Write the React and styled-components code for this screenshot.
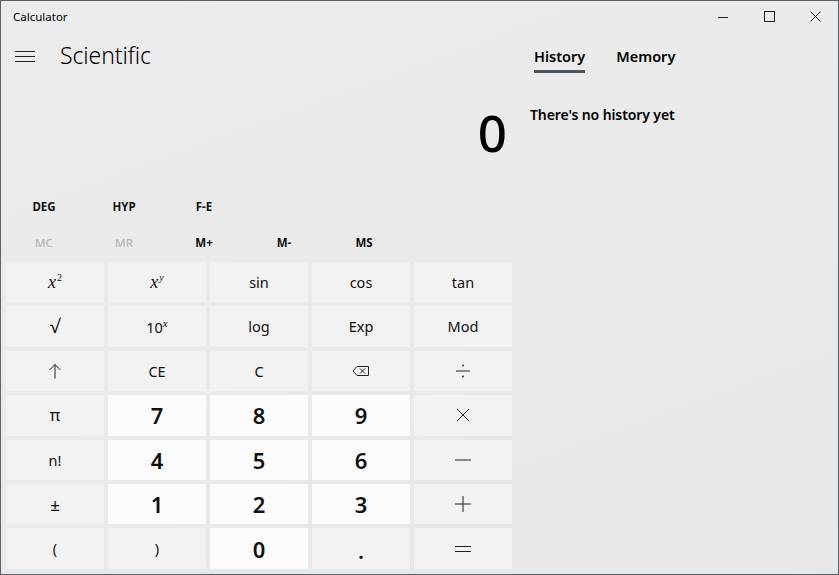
import React from "react";
import styled, { createGlobalStyle } from "styled-components";

const GlobalStyle = createGlobalStyle`
  html, body {
    margin: 0;
    padding: 0;
    background: #eaeaea;
  }
  * {
    box-sizing: border-box;
  }
`;

const Window = styled.div`
  width: 839px;
  height: 575px;
  border: 1px solid #5b6168;
  background: linear-gradient(160deg, #ececec 0%, #e9e9e9 60%, #e7e7e7 100%);
  font-family: "Noto Sans", "Open Sans", sans-serif;
  color: #000;
  display: flex;
  flex-direction: column;
  overflow: hidden;
`;

const TitleBar = styled.div`
  height: 31px;
  display: flex;
  align-items: center;
`;

const AppName = styled.div`
  flex: 1;
  padding-left: 12px;
  font-size: 11.5px;
  line-height: 1;
`;

const WinButton = styled.div`
  width: 46px;
  height: 31px;
  display: flex;
  align-items: center;
  justify-content: center;
`;

const Body = styled.div`
  flex: 1;
  display: flex;
`;

const LeftPane = styled.div`
  width: 517px;
  display: flex;
  flex-direction: column;
`;

const Header = styled.div`
  height: 49px;
  display: flex;
  align-items: center;
  padding-left: 14px;
  gap: 25px;
`;

const Title = styled.div`
  font-size: 23px;
  font-weight: 300;
  letter-spacing: -0.1px;
  margin-top: -3px;
`;

const Display = styled.div`
  height: 108px;
  display: flex;
  justify-content: flex-end;
  align-items: flex-start;
  padding-right: 11px;
  padding-top: 26px;
`;

const Value = styled.div`
  font-size: 51px;
  font-weight: 500;
  line-height: 1;
`;

const LabelRow = styled.div`
  height: 36px;
  display: flex;
  align-items: center;
  padding-left: 3px;
`;

const Label = styled.div`
  width: 80px;
  text-align: center;
  font-size: 11.5px;
  color: ${(p) => (p.disabled ? "#b5b5b5" : "#111")};
  font-weight: ${(p) => (p.disabled ? 500 : 700)};
  margin-top: -2px;
`;

const Keypad = styled.div`
  display: grid;
  grid-template-columns: repeat(5, 98px);
  grid-template-rows: repeat(7, 40.4px);
  gap: 4px;
  padding-left: 5px;
  margin-top: 1px;
`;

const Key = styled.div`
  background: ${(p) => (p.digit ? "#fbfbfb" : "#f2f2f2")};
  display: flex;
  align-items: center;
  justify-content: center;
  font-size: ${(p) => (p.digit ? "22px" : "14.5px")};
  font-weight: ${(p) => (p.digit ? 600 : 400)};
  color: #111;
  line-height: 1;
`;

const MathX = styled.span`
  font-family: "Liberation Serif", "DejaVu Serif", serif;
  font-style: italic;
  font-size: 18px;
`;

const Sup = styled.sup`
  font-size: 10px;
  font-style: ${(p) => (p.italic ? "italic" : "normal")};
  vertical-align: 7px;
  line-height: 0;
  margin-left: 1px;
`;

const RightPane = styled.div`
  flex: 1;
  padding-left: 12px;
  display: flex;
  flex-direction: column;
`;

const Tabs = styled.div`
  height: 49px;
  display: flex;
  align-items: flex-start;
  gap: 31px;
  padding-left: 4px;
  padding-top: 14px;
`;

const Tab = styled.div`
  font-size: 14.5px;
  font-weight: 600;
  padding-bottom: 4px;
  border-bottom: 3px solid ${(p) => (p.active ? "#50565e" : "transparent")};
`;

const Empty = styled.div`
  margin-top: 24px;
  font-size: 14px;
  font-weight: 600;
  letter-spacing: -0.1px;
`;

const Icon = ({ children, w = 16, h = 16 }) => (
  <svg width={w} height={h} viewBox={`0 0 ${w} ${h}`} fill="none" stroke="#222" strokeWidth="1">
    {children}
  </svg>
);

const keys = [
  [
    { l: <MathX>x<Sup>2</Sup></MathX> },
    { l: <MathX>x<Sup italic>y</Sup></MathX> },
    { l: "sin" },
    { l: "cos" },
    { l: "tan" },
  ],
  [
    { l: <span style={{ fontSize: 19 }}>√</span> },
    { l: <span>10<MathX style={{ fontSize: 11, verticalAlign: 6 }}>x</MathX></span> },
    { l: "log" },
    { l: "Exp" },
    { l: "Mod" },
  ],
  [
    {
      l: (
        <Icon w={14} h={16}>
          <path d="M7 1.5V15.5M1.5 7L7 1.5L12.5 7" />
        </Icon>
      ),
    },
    { l: "CE" },
    { l: "C" },
    {
      l: (
        <Icon w={18} h={12}>
          <path d="M5 1.5H16.5V10.5H5L1 6Z" />
          <path d="M8 3.5L13 8.5M13 3.5L8 8.5" />
        </Icon>
      ),
    },
    {
      l: (
        <Icon w={16} h={16}>
          <path d="M1 8H15" />
          <circle cx="8" cy="2.5" r="0.9" fill="#222" stroke="none" />
          <circle cx="8" cy="13.5" r="0.9" fill="#222" stroke="none" />
        </Icon>
      ),
    },
  ],
  [
    { l: <span style={{ fontSize: 16 }}>π</span> },
    { l: "7", d: true },
    { l: "8", d: true },
    { l: "9", d: true },
    {
      l: (
        <Icon w={14} h={14}>
          <path d="M1 1L13 13M13 1L1 13" />
        </Icon>
      ),
    },
  ],
  [
    { l: "n!" },
    { l: "4", d: true },
    { l: "5", d: true },
    { l: "6", d: true },
    {
      l: (
        <Icon w={16} h={4}>
          <path d="M0 2H16" />
        </Icon>
      ),
    },
  ],
  [
    { l: <span style={{ fontSize: 17 }}>±</span> },
    { l: "1", d: true },
    { l: "2", d: true },
    { l: "3", d: true },
    {
      l: (
        <Icon w={16} h={16}>
          <path d="M0 8H16M8 0V16" />
        </Icon>
      ),
    },
  ],
  [
    { l: "(" },
    { l: ")" },
    { l: "0", d: true },
    { l: <span style={{ fontSize: 22, fontWeight: 600, marginTop: 2 }}>.</span> },
    {
      l: (
        <Icon w={16} h={8}>
          <path d="M0 1.5H16M0 6.5H16" />
        </Icon>
      ),
    },
  ],
];

export default function App() {
  return (
    <>
      <GlobalStyle />
      <Window>
        <TitleBar>
          <AppName>Calculator</AppName>
          <WinButton>
            <Icon w={10} h={10}>
              <path d="M0 5.5H10" />
            </Icon>
          </WinButton>
          <WinButton>
            <Icon w={11} h={11}>
              <rect x="0.5" y="0.5" width="10" height="10" />
            </Icon>
          </WinButton>
          <WinButton>
            <Icon w={11} h={11}>
              <path d="M0.5 0.5L10.5 10.5M10.5 0.5L0.5 10.5" />
            </Icon>
          </WinButton>
        </TitleBar>
        <Body>
          <LeftPane>
            <Header>
              <Icon w={20} h={14}>
                <path d="M0 1.5H20M0 6.5H20M0 11.5H20" />
              </Icon>
              <Title>Scientific</Title>
            </Header>
            <Display>
              <Value>0</Value>
            </Display>
            <LabelRow>
              <Label>DEG</Label>
              <Label>HYP</Label>
              <Label>F-E</Label>
            </LabelRow>
            <LabelRow>
              <Label disabled>MC</Label>
              <Label disabled>MR</Label>
              <Label>M+</Label>
              <Label>M-</Label>
              <Label>MS</Label>
            </LabelRow>
            <Keypad>
              {keys.flat().map((k, i) => (
                <Key key={i} digit={k.d}>
                  {k.l}
                </Key>
              ))}
            </Keypad>
          </LeftPane>
          <RightPane>
            <Tabs>
              <Tab active>History</Tab>
              <Tab>Memory</Tab>
            </Tabs>
            <Empty>There's no history yet</Empty>
          </RightPane>
        </Body>
      </Window>
    </>
  );
}
